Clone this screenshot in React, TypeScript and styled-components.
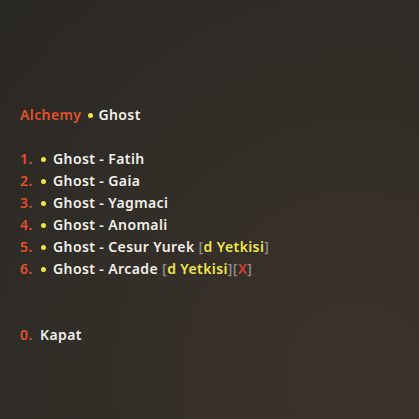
import React from 'react';
import styled, { createGlobalStyle } from 'styled-components';

const GlobalStyle = createGlobalStyle`
  html, body {
    margin: 0;
    padding: 0;
    width: 419px;
    height: 419px;
    overflow: hidden;
  }
  body {
    font-family: 'Noto Sans', 'DejaVu Sans', sans-serif;
  }
`;

const Screen = styled.div`
  width: 419px;
  height: 419px;
  box-sizing: border-box;
  padding: 104px 0 0 20px;
  background: radial-gradient(ellipse at 85% 90%, #3b3329 0%, #332e28 45%, #2a2824 100%);
  font-size: 14px;
  line-height: 22px;
  font-weight: 600;
  letter-spacing: 0.4px;
  color: #f2f0ea;
`;

const Line = styled.div`
  height: 22px;
  white-space: pre;
`;

const Orange = styled.span`
  color: #e3512c;
`;

const Num = styled.span`
  color: #e3512c;
  display: inline-block;
  width: 20px;
`;

const Dot = styled.span<{ $left?: number; $right?: number }>`
  display: inline-block;
  width: 5px;
  height: 5px;
  border-radius: 50%;
  background: #f2e24a;
  vertical-align: 2px;
  margin: 0 ${(p) => p.$right ?? 7}px 0 ${(p) => p.$left ?? 1}px;
`;

const Bracket = styled.span`
  color: #8d8a80;
`;

const Yellow = styled.span`
  color: #f2e64c;
`;

const Red = styled.span`
  color: #d8402b;
`;

const Spacer = styled.div<{ $lines: number }>`
  height: ${(p) => p.$lines * 22}px;
`;

const items = [
  { name: 'Fatih' },
  { name: 'Gaia' },
  { name: 'Yagmaci' },
  { name: 'Anomali' },
  { name: 'Cesur Yurek', yetki: true },
  { name: 'Arcade', yetki: true, x: true },
];

const App: React.FC = () => {
  return (
    <>
      <GlobalStyle />
      <Screen>
        <Line>
          <Orange>Alchemy</Orange>
          <Dot $left={7} $right={5} />Ghost
        </Line>
        <Spacer $lines={1} />
        {items.map((item, i) => (
          <Line key={i}>
            <Num>{i + 1}.</Num>
            <Dot />
            {'Ghost - ' + item.name}
            {item.yetki && (
              <>
                {' '}
                <Bracket>[</Bracket>
                <Yellow>d Yetkisi</Yellow>
                <Bracket>]</Bracket>
              </>
            )}
            {item.x && (
              <>
                <Bracket>[</Bracket>
                <Red>X</Red>
                <Bracket>]</Bracket>
              </>
            )}
          </Line>
        ))}
        <Spacer $lines={2} />
        <Line>
          <Num>0.</Num>Kapat
        </Line>
      </Screen>
    </>
  );
};

export default App;
